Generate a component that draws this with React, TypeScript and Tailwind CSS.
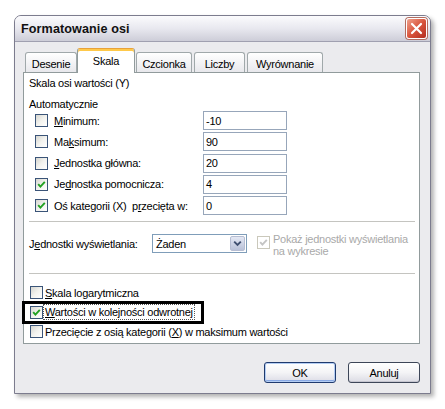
import clsx from 'clsx';

function Box({ checked, disabled }: { checked?: boolean; disabled?: boolean }) {
  return (
    <span
      className={clsx(
        'flex h-[13px] w-[13px] shrink-0 items-center justify-center border',
        disabled
          ? 'border-[#cac8bb] bg-white'
          : 'border-[#3a5478] bg-gradient-to-br from-[#d6d6d0] via-[#f2f2ee] to-white',
      )}
    >
      {checked && (
        <svg viewBox="0 0 9 9" width="9" height="9">
          <path
            d="M1.2 4.2 L3.4 6.6 L7.8 1.8"
            fill="none"
            stroke={disabled ? '#c4c4c4' : '#21a121'}
            strokeWidth="1.9"
          />
        </svg>
      )}
    </span>
  );
}

function U({ children }: { children: React.ReactNode }) {
  return <span className="underline underline-offset-[1px]">{children}</span>;
}

const rows: { label: React.ReactNode; value: string; checked?: boolean }[] = [
  { label: <><U>M</U>inimum:</>, value: '-10' },
  { label: <>Ma<U>k</U>simum:</>, value: '90' },
  { label: <><U>J</U>ednostka główna:</>, value: '20' },
  { label: <>Je<U>d</U>nostka pomocnicza:</>, value: '4', checked: true },
  { label: <>Oś kategorii (X)&nbsp; p<U>r</U>zecięta w:</>, value: '0', checked: true },
];

const tabs = [
  { name: 'Desenie', w: 'w-[52px] ml-[2px]' },
  { name: 'Skala', w: 'w-[58px]', active: true },
  { name: 'Czcionka', w: 'w-[56px] ml-[1px]' },
  { name: 'Liczby', w: 'w-[51px] ml-[2px]' },
  { name: 'Wyrównanie', w: 'w-[76px] ml-[2px]' },
];

export default function App() {
  return (
    <div className="h-[409px] w-[445px] bg-white pl-[14px] pt-[15px] font-['Liberation_Sans',Arial,sans-serif] text-[11px] leading-[14px] tracking-[-0.25px] text-black">
      <div className="flex h-[379px] w-[417px] flex-col rounded-t-[7px] border border-[#7c7c8e] bg-[#ebebee] shadow-[3px_3px_4px_rgba(0,0,0,0.3)]">
        {/* title bar */}
        <div className="flex h-[26px] shrink-0 items-center justify-between rounded-t-[6px] border-b border-[#a0a0b0] bg-gradient-to-b from-[#fbfbfd] via-[#e8e8ef] to-[#cdcdd8] pl-[6px] pr-[3px]">
          <span className="text-[12.6px] font-bold tracking-[0.1px] text-[#111]">Formatowanie osi</span>
          <span className="flex h-[21px] w-[21px] items-center justify-center rounded-[3px] border border-white bg-gradient-to-br from-[#eea08c] via-[#d9543c] to-[#b32c20] shadow-[0_0_0_1px_#b26c60]">
            <svg viewBox="0 0 13 13" width="13" height="13">
              <path d="M2 2 L11 11 M11 2 L2 11" stroke="white" strokeWidth="2.2" strokeLinecap="round" />
            </svg>
          </span>
        </div>

        {/* body */}
        <div className="flex flex-1 flex-col pl-[8px] pt-[6px]">
          <div className="flex h-[24px] w-[397px] items-end">
            {tabs.map((t) =>
              t.active ? (
                <div
                  key={t.name}
                  className={clsx(
                    t.w,
                    'relative z-10 -mb-px flex h-[25px] items-center justify-center rounded-t-[3px] border border-b-0 border-[#919b9c] border-t-[#e8a23a] bg-white pb-[1px] shadow-[inset_0_2px_0_#ffc94a]',
                  )}
                >
                  {t.name}
                </div>
              ) : (
                <div
                  key={t.name}
                  className={clsx(
                    t.w,
                    'flex h-[20px] items-center justify-center rounded-t-[3px] border border-b-0 border-[#a0a8aa] bg-gradient-to-b from-white to-[#e8e8ec] pt-[2px]',
                  )}
                >
                  {t.name}
                </div>
              ),
            )}
          </div>

          {/* panel */}
          <div className="flex h-[272px] w-[397px] flex-col border border-[#919b9c] bg-white">
            <div className="ml-[5px] mt-[3px]">Skala osi wartości (Y)</div>
            <div className="ml-[5px] mt-[7px]">Automatycznie</div>
            <div className="flex flex-col gap-[2.25px]">
              {rows.map((r, i) => (
                <div key={i} className="flex h-[19px] items-center">
                  <div className="ml-[11px]">
                    <Box checked={r.checked} />
                  </div>
                  <span className="ml-[6px] w-[149px]">{r.label}</span>
                  <div className="flex h-[19px] w-[84px] items-center border border-[#97a6ba] bg-white pl-[2px]">
                    {r.value}
                  </div>
                </div>
              ))}
            </div>

            <div className="ml-[5px] mr-[4px] mt-[6px] border-t border-[#c4c4c0]" />

            <div className="ml-[5px] mt-[12px] flex h-[26px] items-start">
              <div className="flex h-[19px] w-[123px] items-center">
                <span>
                  J<U>e</U>dnostki wyświetlania:
                </span>
              </div>
              <div className="flex h-[19px] w-[95px] items-center justify-between border border-[#7f9db9] bg-white pl-[3px] pr-[1px]">
                <span>Żaden</span>
                <span className="flex h-[15px] w-[15px] items-center justify-center rounded-[2px] border border-[#b6bdd2] bg-gradient-to-b from-[#e4e8f4] to-[#b9c1d8]">
                  <svg viewBox="0 0 9 7" width="9" height="7">
                    <path d="M1.2 1.6 L4.5 4.9 L7.8 1.6" fill="none" stroke="#3f4f70" strokeWidth="1.9" />
                  </svg>
                </span>
              </div>
              <div className="ml-[10px] mt-[2px]">
                <Box checked disabled />
              </div>
              <div className="-mt-[1px] ml-[3px] leading-[12px] text-[#a9a9a9]">
                Pokaż jednostki wyświetlania
                <br />
                na wykresie
              </div>
            </div>

            <div className="ml-[5px] mr-[4px] mt-[13px] border-t border-[#c4c4c0]" />

            <div className="mt-[9px] flex flex-col">
              <div className="flex h-[19.5px] items-center pl-[6px]">
                <Box />
                <span className="ml-[2px]">
                  <U>S</U>kala logarytmiczna
                </span>
              </div>
              <div className="relative flex h-[19.5px] items-center pl-[6px]">
                <Box checked />
                <span className="ml-[1px] px-[1px] outline outline-1 outline-dotted outline-[#555]">
                  <U>W</U>artości w kolejności odwrotnej
                </span>
                <div className="absolute -left-[2px] -top-[1.5px] h-[23px] w-[182px] border-[3px] border-black" />
              </div>
              <div className="flex h-[19.5px] items-center pl-[6px]">
                <Box />
                <span className="ml-[2px]">
                  Przecięcie z osią kategorii (<U>X</U>) w maksimum wartości
                </span>
              </div>
            </div>
          </div>

          {/* buttons */}
          <div className="mt-[18px] flex w-[397px] justify-end gap-[12px]">
            <button className="h-[21px] w-[72px] rounded-[3px] border border-[#1f3a6e] bg-gradient-to-b from-white via-[#f4f4f6] to-[#dcdce6] shadow-[inset_0_0_0_1px_#b4cdf3,inset_0_-2px_0_#89a9e4]">
              OK
            </button>
            <button className="h-[21px] w-[72px] rounded-[3px] border border-[#3d4658] bg-gradient-to-b from-white via-[#f4f4f6] to-[#dcdce4] shadow-[inset_0_-1px_0_#c6c6d0]">
              Anuluj
            </button>
          </div>
        </div>
      </div>
    </div>
  );
}
